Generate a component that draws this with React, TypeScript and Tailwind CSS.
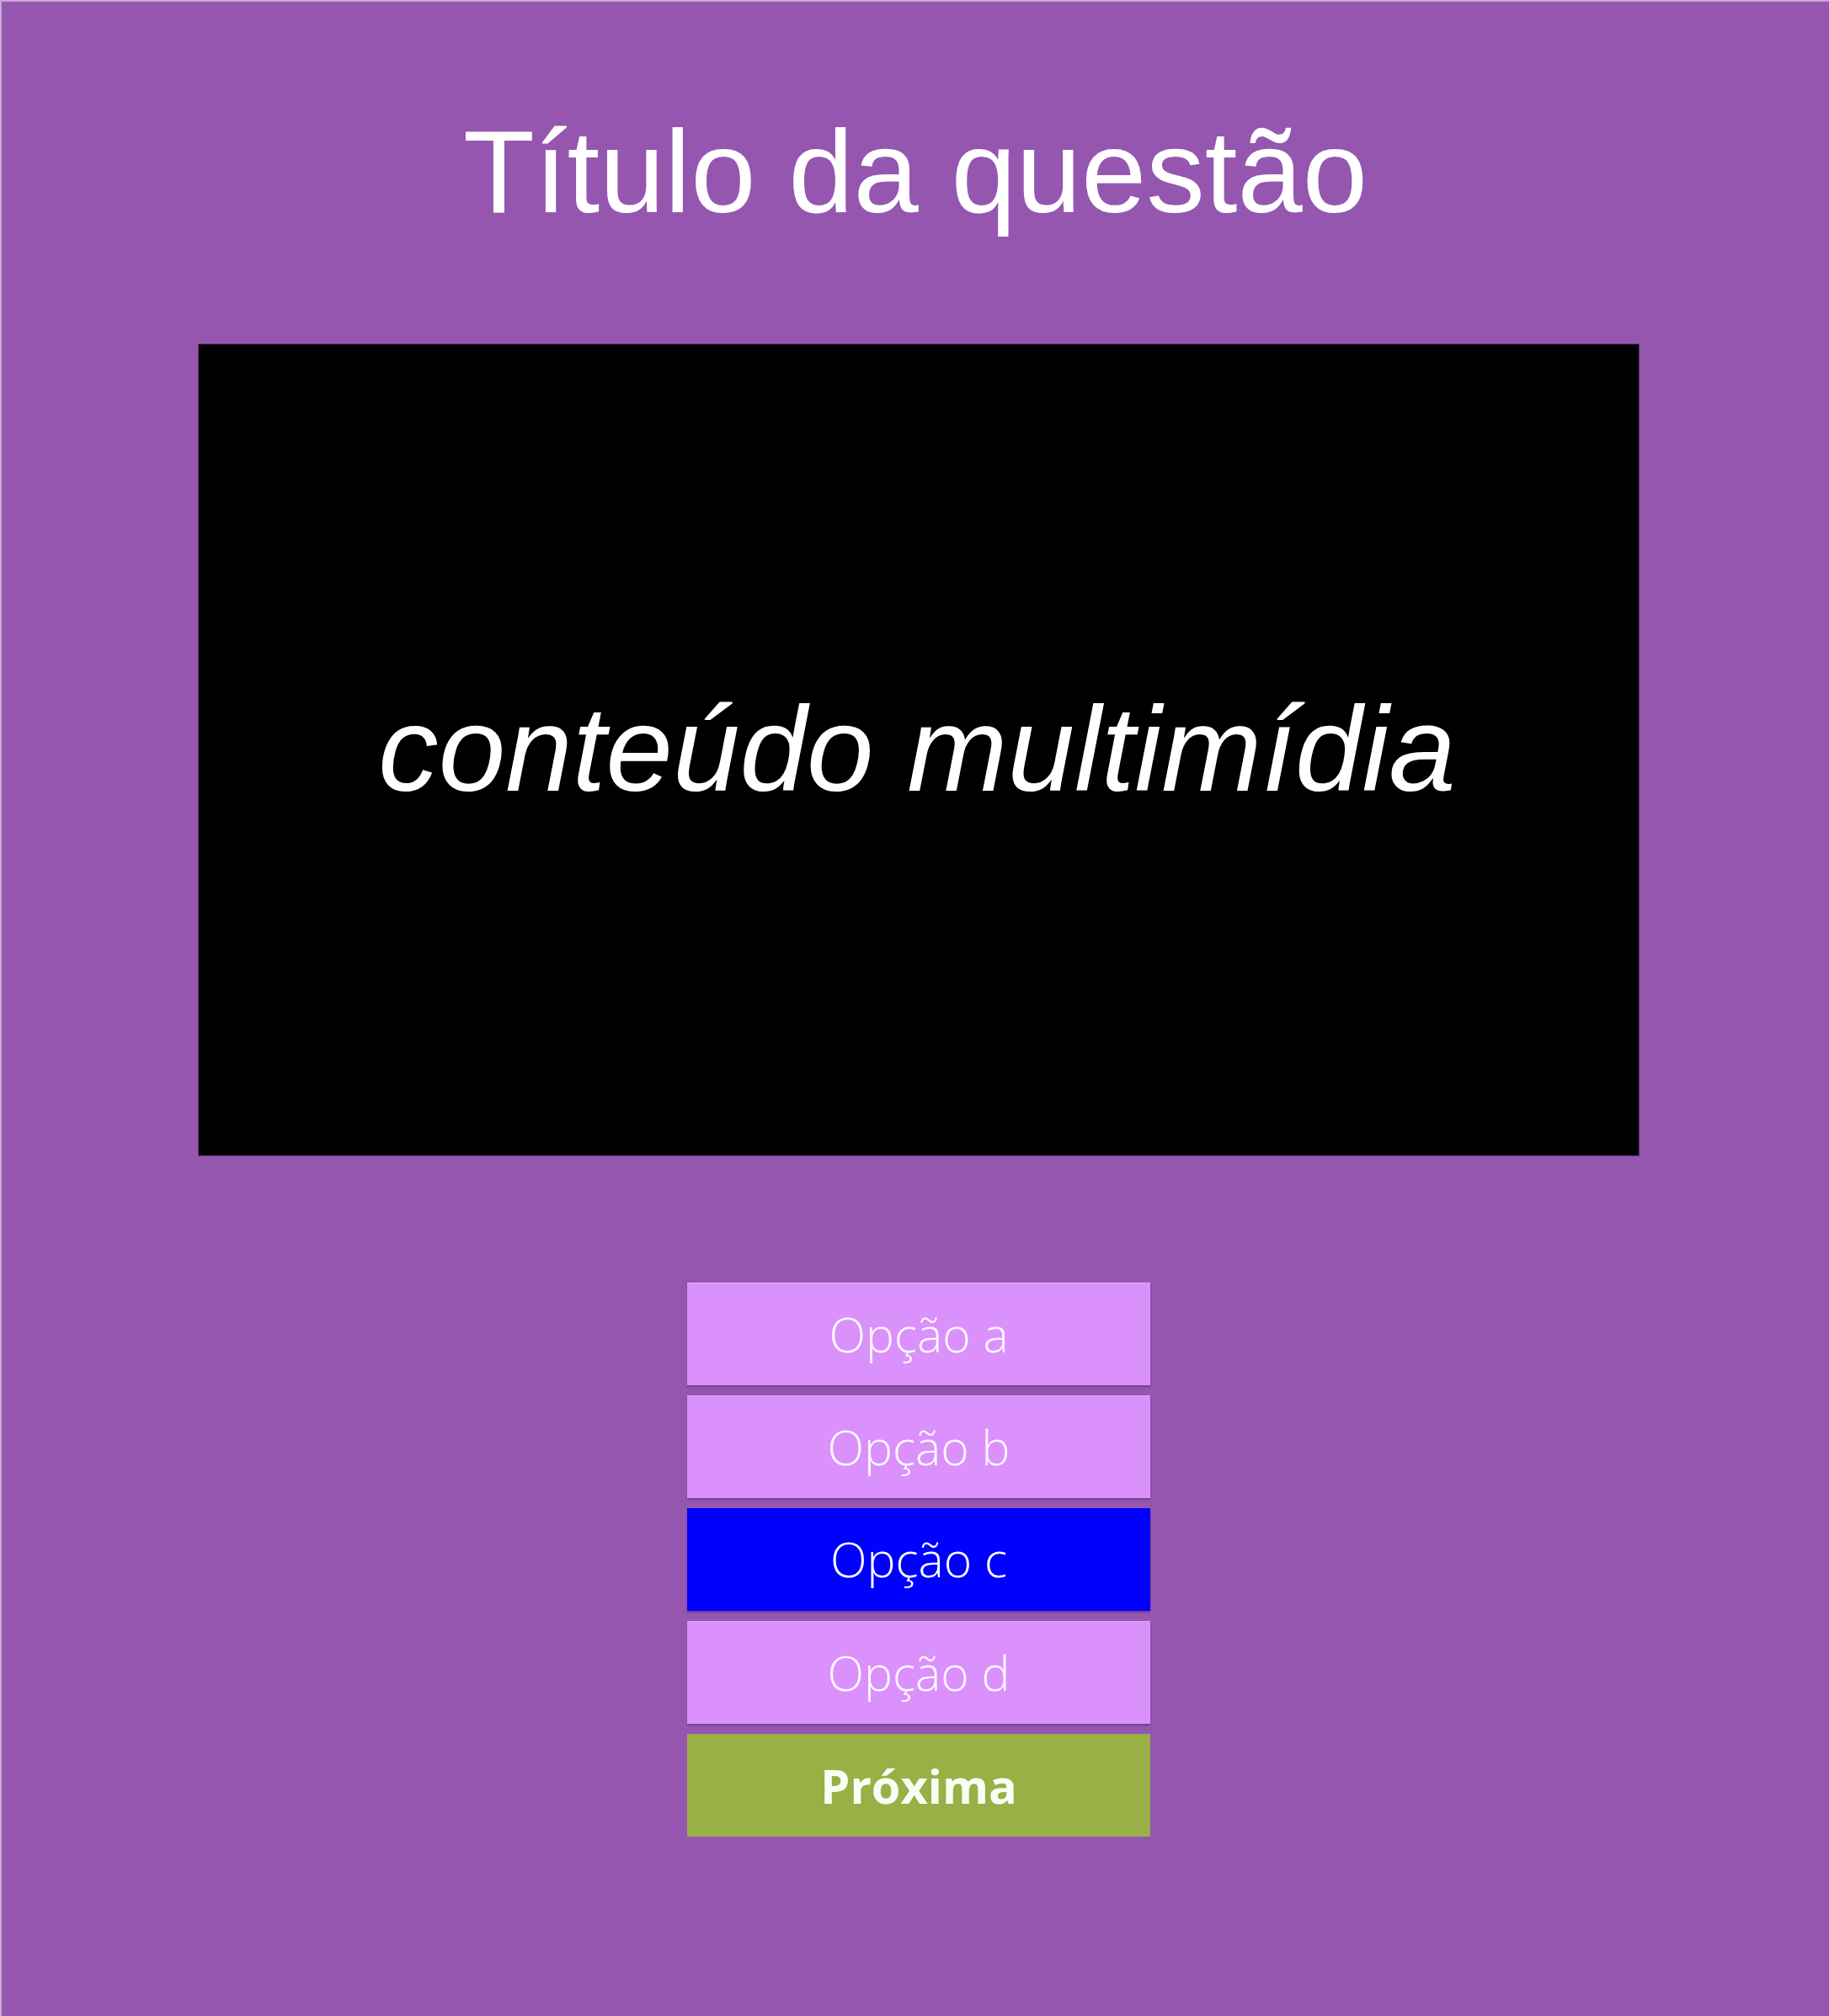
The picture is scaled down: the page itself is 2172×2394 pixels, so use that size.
import React from "react";

const options = [
  { label: "Opção a", selected: false },
  { label: "Opção b", selected: false },
  { label: "Opção c", selected: true },
  { label: "Opção d", selected: false },
];

export default function App() {
  return (
    <div className="w-full h-[2394px] bg-[#9556b0] border-t-2 border-l-2 border-[#c9a6da] flex flex-col items-center overflow-hidden">
      <h1
        className="pt-[125px] text-[139px] leading-[153px] text-white text-center"
        style={{ fontFamily: '"Liberation Sans", Arial, sans-serif' }}
      >
        Título da questão
      </h1>
      <div className="w-full flex flex-col items-center pl-[8px]">
        <div className="mt-[128px] w-[1712px] h-[965px] bg-black border border-[#5e3272] flex items-center justify-center pr-[4px]">
          <span
            className="italic text-[143px] text-white leading-normal"
            style={{ fontFamily: '"Liberation Sans", Arial, sans-serif' }}
          >
            conteúdo multimídia
          </span>
        </div>
        <div className="mt-[150px] flex flex-col gap-[12px] w-[550px]">
          {options.map((o) => (
            <button
              key={o.label}
              className={
                o.selected
                  ? "h-[122px] w-full bg-[#0000ff] text-white text-[57px] font-light flex items-center justify-center shadow-[0_2px_2px_rgba(60,20,80,0.35)]"
                  : "h-[122px] w-full bg-[#da91fb] text-[#fdf5ff] text-[57px] font-light flex items-center justify-center border-t border-[#e4a6fd] shadow-[0_2px_2px_rgba(60,20,80,0.35)]"
              }
              style={{ fontFamily: '"Open Sans", "Noto Sans", sans-serif' }}
            >
              {o.label}
            </button>
          ))}
          <button
            className="h-[122px] w-full bg-[#98b046] text-[#fbfdf5] text-[56px] font-bold flex items-center justify-center"
            style={{ fontFamily: '"Open Sans", "Noto Sans", sans-serif' }}
          >
            Próxima
          </button>
        </div>
      </div>
    </div>
  );
}
